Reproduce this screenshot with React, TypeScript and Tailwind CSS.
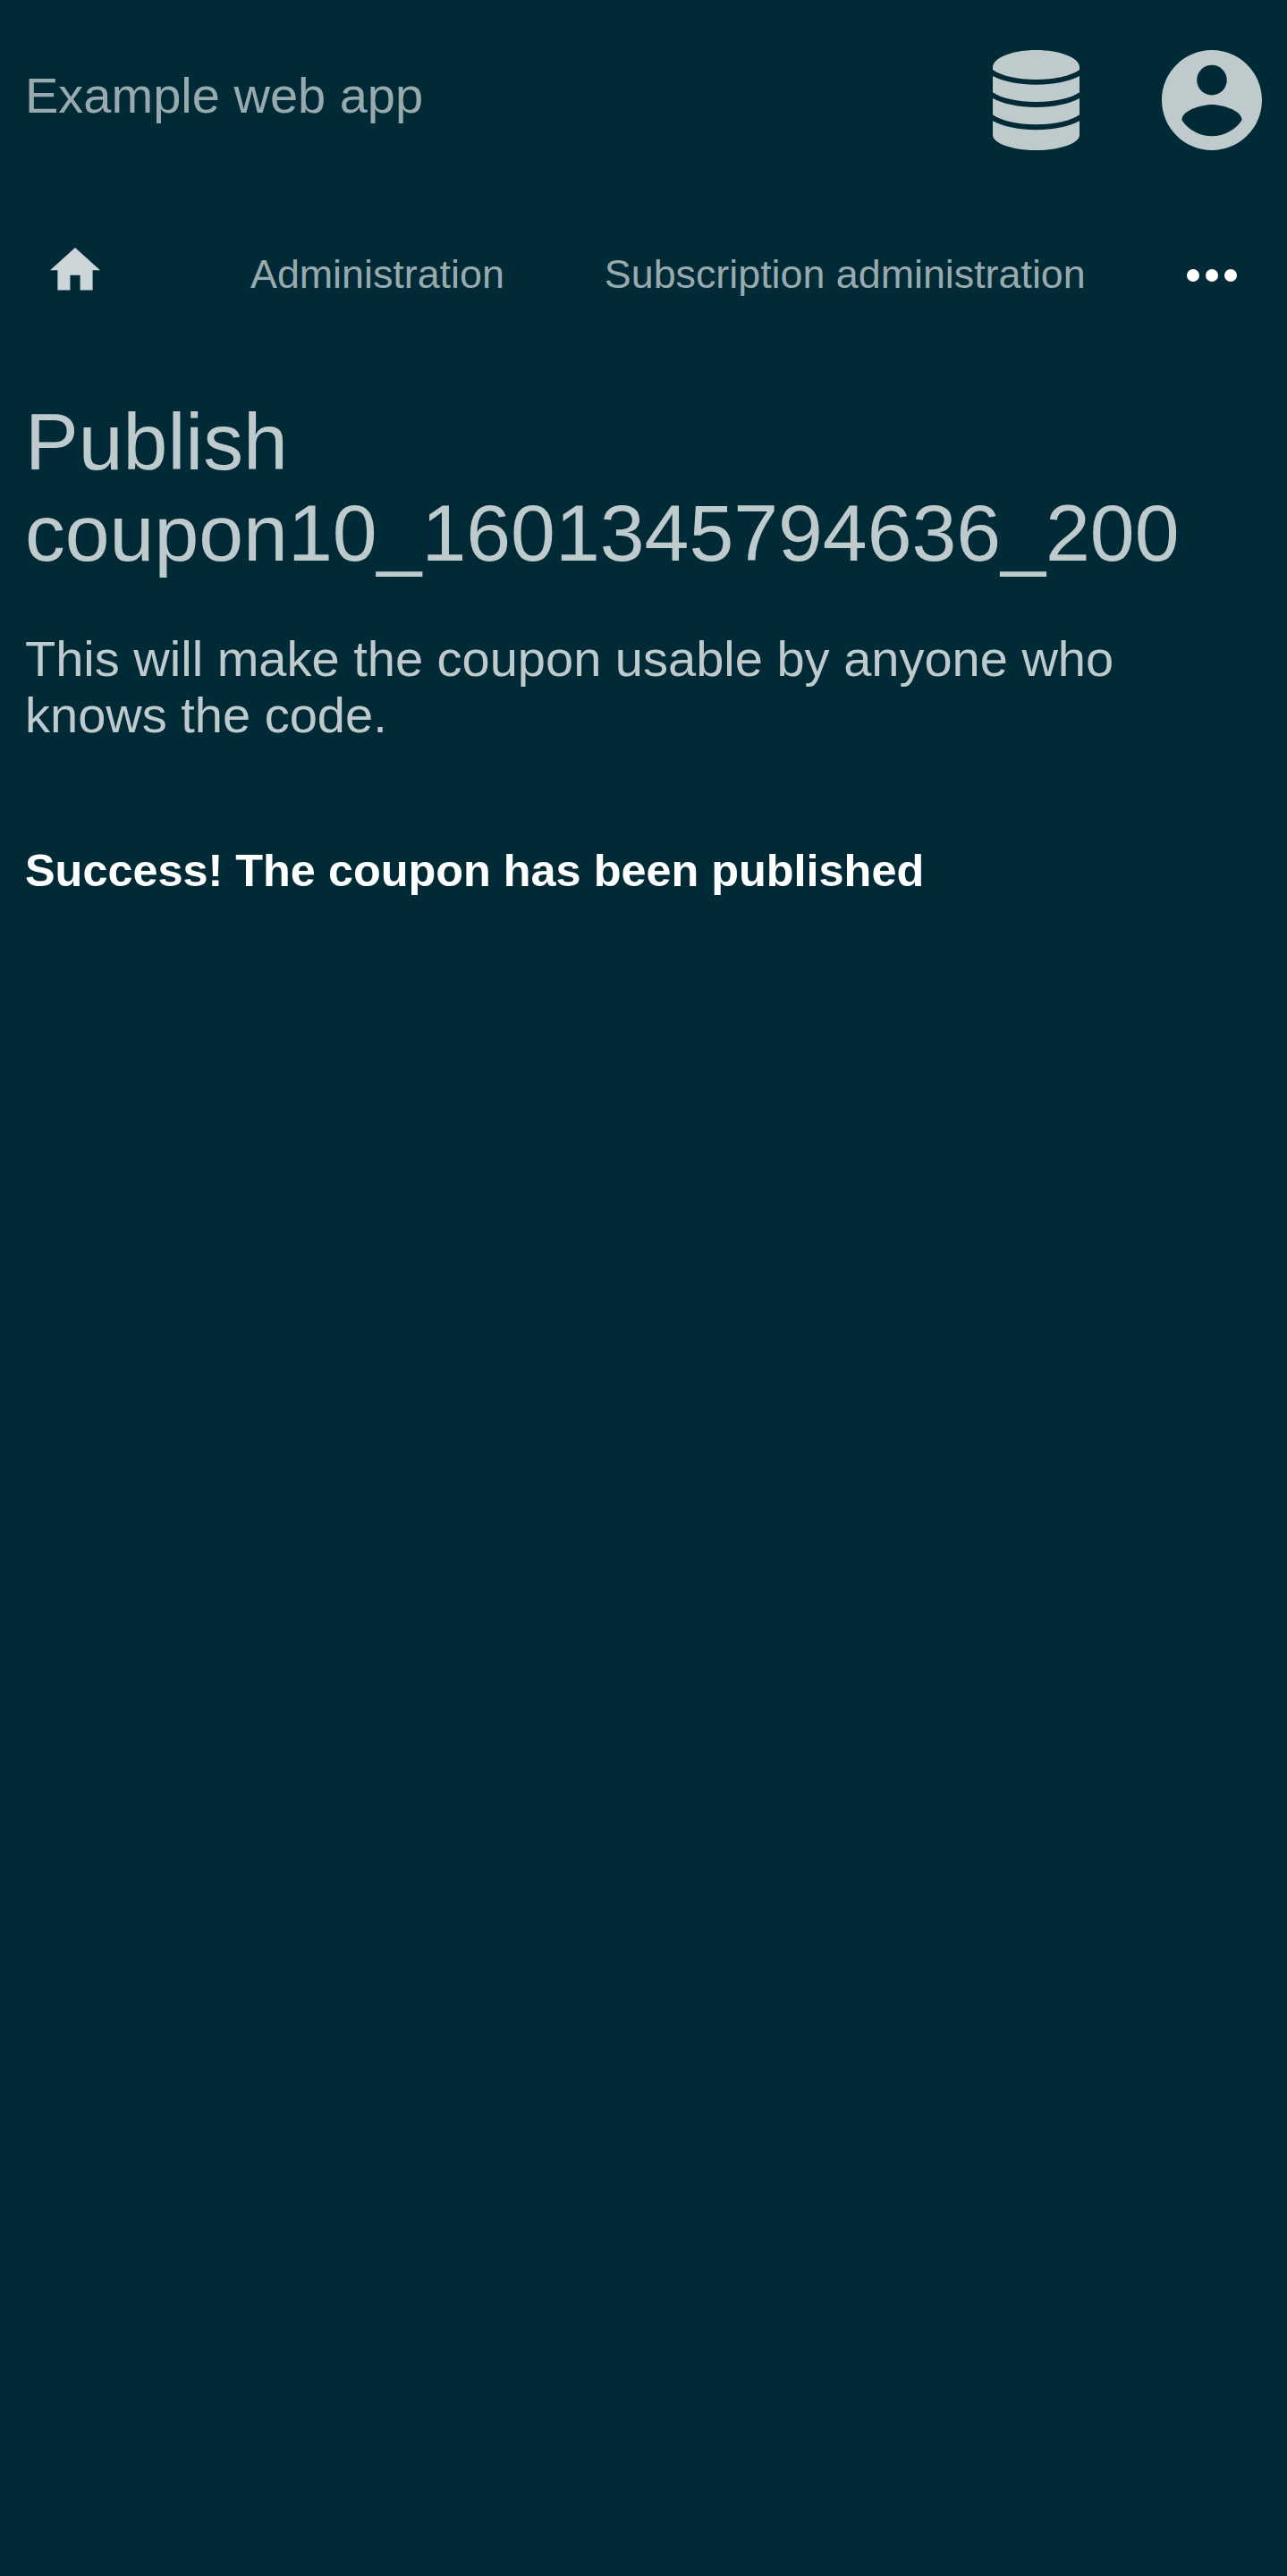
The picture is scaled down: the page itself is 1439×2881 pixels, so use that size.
import type { SVGProps } from "react";

function DatabaseIcon(props: SVGProps<SVGSVGElement>) {
  return (
    <svg viewBox="0 0 290 336" preserveAspectRatio="none" fill="currentColor" aria-hidden="true" {...props}>
      <path d="M0 58C0 26 65 0 145 0S290 26 290 58V66C262 86 208 99 145 99S28 86 0 66Z" />
      <path d="M0 87C36 106 88 116 145 116S254 106 290 87V142C262 162 208 174 145 174S28 162 0 142Z" />
      <path d="M0 162C36 181 88 192 145 192S254 181 290 162V217C262 237 208 250 145 250S28 237 0 217Z" />
      <path d="M0 238C36 257 88 268 145 268S254 257 290 238V285C290 313 225 336 145 336S0 313 0 285Z" />
    </svg>
  );
}

function AccountIcon(props: SVGProps<SVGSVGElement>) {
  return (
    <svg viewBox="2 2 20 20" fill="currentColor" aria-hidden="true" {...props}>
      <path d="M12 2C6.48 2 2 6.48 2 12s4.48 10 10 10 10-4.48 10-10S17.52 2 12 2zm0 3c1.66 0 3 1.34 3 3s-1.34 3-3 3-3-1.34-3-3 1.34-3 3-3zm0 14.2c-2.5 0-4.71-1.28-6-3.22.03-1.99 4-3.08 6-3.08 1.99 0 5.97 1.09 6 3.08-1.29 1.94-3.5 3.22-6 3.22z" />
    </svg>
  );
}

function HomeIcon(props: SVGProps<SVGSVGElement>) {
  return (
    <svg viewBox="2 3 20 17" fill="currentColor" aria-hidden="true" {...props}>
      <path d="M10 20v-6h4v6h5v-8h3L12 3 2 12h3v8z" />
    </svg>
  );
}

function MoreIcon(props: SVGProps<SVGSVGElement>) {
  return (
    <svg viewBox="0 0 56 14" fill="currentColor" aria-hidden="true" {...props}>
      <circle cx="7" cy="7" r="7" />
      <circle cx="28" cy="7" r="7" />
      <circle cx="49" cy="7" r="7" />
    </svg>
  );
}

export default function App() {
  return (
    <div className="min-h-[2881px] w-full overflow-hidden bg-[#002b36] px-7 text-[#bfcacd] [font-family:'Liberation_Sans',Arial,sans-serif]">
      <header className="flex h-56 items-start">
        <div className="mt-[75px] text-[56px] leading-[63px] text-[#99aaaf]">Example web app</div>
        <DatabaseIcon className="mt-14 ml-auto h-28 w-[97px]" />
        <AccountIcon className="mt-14 ml-[92px] size-28" />
      </header>
      <nav className="flex h-[168px] items-start pt-[53px] text-[44.8px] leading-[50px] text-[#99aaaf]">
        <HomeIcon className="mt-[0.4px] ml-7 h-[47.6px] w-14 text-[#ccd5d7]" />
        <a className="mt-1 ml-[168px] whitespace-nowrap">Administration</a>
        <a className="mt-1 ml-28 whitespace-nowrap">Subscription administration</a>
        <MoreIcon className="mt-6 mr-7 ml-auto h-3.5 w-14 text-white" />
      </nav>
      <h1 className="mt-[51px] text-[89.6px] leading-[102px]">
        Publish
        <br />
        coupon10_1601345794636_200
      </h1>
      <p className="mt-[58px] text-[56px] leading-[63px]">
        This will make the coupon usable by anyone who
        <br />
        knows the code.
      </p>
      <p className="mt-[114px] text-[50.4px] leading-[57px] font-bold text-white">
        Success! The coupon has been published
      </p>
    </div>
  );
}
